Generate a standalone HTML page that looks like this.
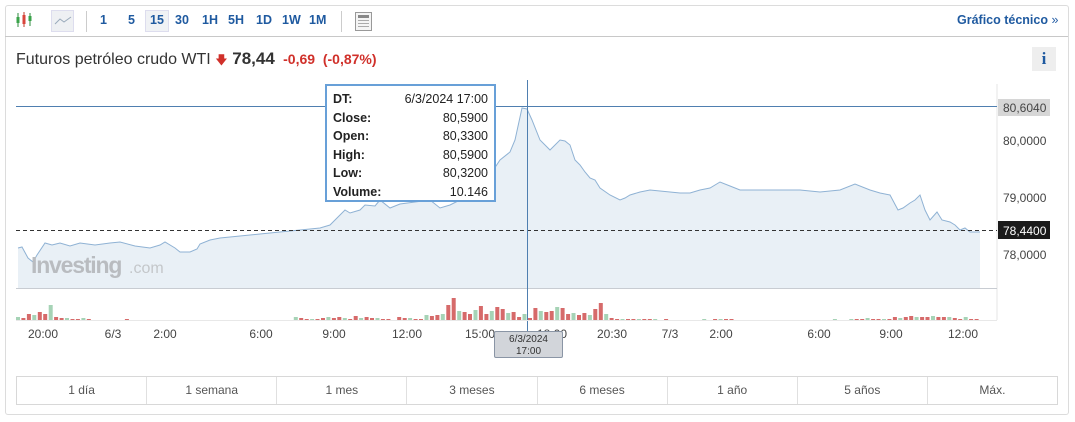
<!DOCTYPE html>
<html><head><meta charset="utf-8"><style>
body{margin:0;background:#fff;font-family:"Liberation Sans",Arial,sans-serif;width:1075px;height:422px;overflow:hidden;position:relative}
.box{position:absolute;left:5px;top:5px;width:1062px;height:408px;border:1px solid #dcdcdc;border-radius:3px}
.tb{position:absolute;left:5px;top:5px;width:1063px;height:31px;border-bottom:1px solid #c8c8c8}
.tf{position:absolute;top:13px;font-size:12.5px;font-weight:bold;color:#1f5aa0}
.title{position:absolute;left:16px;top:49px;font-size:16px;color:#333}
.rng{position:absolute;left:16px;top:376px;width:1040px;height:27px;border:1px solid #d8d8d8;display:flex}
.rng div{flex:1;border-right:1px solid #e0e0e0;text-align:center;font-size:12px;color:#555;line-height:27px}
.rng div:last-child{border-right:none}
.tl{position:absolute;top:327px;font-size:12px;color:#444;transform:translateX(-50%)}
.ax{position:absolute;left:1003px;font-size:12px;color:#444}
</style></head><body>
<div class="box"></div>
<div class="tb"></div>
<svg style="position:absolute;left:15px;top:11px" width="20" height="18"><g stroke-width="1"><line x1="3" y1="2" x2="3" y2="16" stroke="#2e8b3e"/><rect x="1.5" y="6" width="3" height="6" fill="#3aa34a"/><line x1="9" y1="1" x2="9" y2="16" stroke="#c0392b"/><rect x="7.5" y="4" width="3" height="9" fill="#d9453c"/><line x1="15" y1="2" x2="15" y2="15" stroke="#2e8b3e"/><rect x="13.5" y="5" width="3" height="5" fill="#3aa34a"/></g></svg>
<div style="position:absolute;left:51px;top:10px;width:21px;height:20px;background:#eef0f3;border:1px solid #dde"></div>
<svg style="position:absolute;left:54px;top:14px" width="18" height="12"><polyline points="1,10 6,5 10,8 17,3" fill="none" stroke="#9ab" stroke-width="1"/></svg>
<div style="position:absolute;left:86px;top:11px;width:1px;height:21px;background:#ccc"></div>
<div class="tf" style="left:100px">1</div><div class="tf" style="left:128px">5</div>
<div style="position:absolute;left:145px;top:10px;width:22px;height:20px;background:#f0f2f5;border:1px solid #dde"></div>
<div class="tf" style="left:150px">15</div><div class="tf" style="left:175px">30</div><div class="tf" style="left:202px">1H</div><div class="tf" style="left:228px">5H</div><div class="tf" style="left:256px">1D</div><div class="tf" style="left:282px">1W</div><div class="tf" style="left:309px">1M</div>
<div style="position:absolute;left:341px;top:11px;width:1px;height:21px;background:#ccc"></div>
<div style="position:absolute;left:355px;top:12px;width:15px;height:17px;border:1px solid #999;background:#f4f4f4"><div style="margin:2px;height:3px;background:#888"></div><div style="margin:2px;height:1px;background:#aaa"></div><div style="margin:2px;height:1px;background:#aaa"></div><div style="margin:2px;height:1px;background:#aaa"></div></div>
<div class="tf" style="left:957px">Gráfico técnico <span style="font-weight:normal;color:#2a62a8">»</span></div>
<div class="title">Futuros petróleo crudo WTI <span style="color:#d0302a;font-size:12px">&#129095;</span><b style="font-size:17px"> 78,44</b> <b style="color:#d0302a;font-size:14px">&nbsp;-0,69 &nbsp;(-0,87%)</b></div>
<div style="position:absolute;left:1032px;top:47px;width:24px;height:24px;background:#eee;color:#1f5aa0;font:bold 17px 'Liberation Serif',serif;text-align:center;line-height:24px">i</div>
<svg style="position:absolute;left:0;top:0" width="1075" height="422">
<line x1="997" y1="84" x2="997" y2="320" stroke="#e5e5e5"/>
<path d="M18,248 L22,247 L28,258 L33,262 L37,255 L45,243 L52,245 L60,243 L70,246 L80,243 L95,245 L110,243 L120,242 L135,246 L150,248 L160,245 L165,242 L175,248 L180,252 L190,252 L197,249 L200,244 L210,240 L220,238 L240,236 L260,234 L280,232 L300,230 L320,228 L330,225 L340,215 L345,210 L350,213 L360,210 L365,205 L375,206 L380,200 L390,208 L400,204 L430,200 L440,208 L450,205 L460,200 L470,195 L480,180 L490,175 L500,160 L510,152 L515,140 L522,108 L527,109 L532,120 L540,140 L550,150 L560,140 L565,141 L570,145 L575,160 L580,165 L585,172 L590,178 L595,180 L600,188 L610,195 L620,200 L625,198 L630,195 L640,192 L650,190 L670,192 L680,193 L690,193 L700,190 L710,188 L720,182 L730,186 L740,190 L760,190 L800,190 L820,192 L840,190 L855,184 L870,190 L880,193 L890,195 L898,210 L903,208 L910,203 L915,200 L920,195 L925,210 L930,220 L937,212 L942,220 L950,222 L955,225 L960,230 L965,228 L970,232 L980,232 L980,288 L18,288Z" fill="#e9f0f6"/>
<path d="M18,248 L22,247 L28,258 L33,262 L37,255 L45,243 L52,245 L60,243 L70,246 L80,243 L95,245 L110,243 L120,242 L135,246 L150,248 L160,245 L165,242 L175,248 L180,252 L190,252 L197,249 L200,244 L210,240 L220,238 L240,236 L260,234 L280,232 L300,230 L320,228 L330,225 L340,215 L345,210 L350,213 L360,210 L365,205 L375,206 L380,200 L390,208 L400,204 L430,200 L440,208 L450,205 L460,200 L470,195 L480,180 L490,175 L500,160 L510,152 L515,140 L522,108 L527,109 L532,120 L540,140 L550,150 L560,140 L565,141 L570,145 L575,160 L580,165 L585,172 L590,178 L595,180 L600,188 L610,195 L620,200 L625,198 L630,195 L640,192 L650,190 L670,192 L680,193 L690,193 L700,190 L710,188 L720,182 L730,186 L740,190 L760,190 L800,190 L820,192 L840,190 L855,184 L870,190 L880,193 L890,195 L898,210 L903,208 L910,203 L915,200 L920,195 L925,210 L930,220 L937,212 L942,220 L950,222 L955,225 L960,230 L965,228 L970,232 L980,232" fill="none" stroke="#8fb2d4" stroke-width="1"/>
<line x1="16" y1="288.5" x2="997" y2="288.5" stroke="#c8ccd2"/>
<line x1="16" y1="106.5" x2="997" y2="106.5" stroke="#4f7fb0"/>
<line x1="16" y1="230.5" x2="997" y2="230.5" stroke="#333" stroke-dasharray="4,3"/>
<line x1="527.5" y1="80" x2="527.5" y2="336" stroke="#4f7fb0"/>
<line x1="16" y1="320.5" x2="997" y2="320.5" stroke="#e8e8e8"/>
<g id="vol"></g>
<text x="31" y="273" font-family="Liberation Sans" font-weight="bold" font-size="23" fill="#b9bcc0" letter-spacing="-1.2">Investing</text>
<text x="129" y="273" font-family="Liberation Sans" font-size="16" fill="#c4c7ca">.com</text>
</svg>
<div style="position:absolute;left:325px;top:84px;width:171px;height:118px;background:#fff;border:2px solid #68a0d8;font-size:12.5px;color:#222;line-height:18.5px;padding:4px 6px 0 6px;box-sizing:border-box">
<div style="display:flex;justify-content:space-between"><b>DT:</b><span>6/3/2024 17:00</span></div>
<div style="display:flex;justify-content:space-between"><b>Close:</b><span>80,5900</span></div>
<div style="display:flex;justify-content:space-between"><b>Open:</b><span>80,3300</span></div>
<div style="display:flex;justify-content:space-between"><b>High:</b><span>80,5900</span></div>
<div style="display:flex;justify-content:space-between"><b>Low:</b><span>80,3200</span></div>
<div style="display:flex;justify-content:space-between"><b>Volume:</b><span>10.146</span></div>
</div>
<div style="position:absolute;left:998px;top:99px;width:52px;height:17px;background:#d6d6d6"></div>
<div class="ax" style="top:101px">80,6040</div>
<div class="ax" style="top:134px">80,0000</div>
<div class="ax" style="top:191px">79,0000</div>
<div style="position:absolute;left:998px;top:221px;width:52px;height:18px;background:#1a1a1a"></div>
<div class="ax" style="top:224px;color:#fff">78,4400</div>
<div class="ax" style="top:248px">78,0000</div>
<div class="tl" style="left:43px">20:00</div><div class="tl" style="left:113px">6/3</div><div class="tl" style="left:165px">2:00</div><div class="tl" style="left:261px">6:00</div><div class="tl" style="left:334px">9:00</div><div class="tl" style="left:407px">12:00</div><div class="tl" style="left:480px">15:00</div><div class="tl" style="left:552px">18:00</div><div class="tl" style="left:612px">20:30</div><div class="tl" style="left:670px">7/3</div><div class="tl" style="left:721px">2:00</div><div class="tl" style="left:819px">6:00</div><div class="tl" style="left:891px">9:00</div><div class="tl" style="left:963px">12:00</div>
<div style="position:absolute;left:494px;top:331px;width:69px;height:27px;background:#d2d5da;border:1px solid #8a95a5;border-radius:2px;font-size:10px;color:#333;text-align:center;line-height:12px;padding-top:2px;box-sizing:border-box">6/3/2024<br>17:00</div>
<div class="rng"><div>1 día</div><div>1 semana</div><div>1 mes</div><div>3 meses</div><div>6 meses</div><div>1 año</div><div>5 años</div><div>Máx.</div></div>
<script>
var h=[3,2,6,5,8,6,15,3,2,2,1,1,2,1,0,0,0,0,0,0,1,0,0,0,0,0,0,0,0,0,0,0,0,0,0,0,0,0,0,0,0,0,0,0,0,0,0,0,0,0,0,3,2,1,1,1,2,3,2,3,2,1,4,2,3,2,2,1,1,0,3,2,2,1,1,5,4,5,6,15,22,9,8,6,10,14,6,9,13,11,7,8,3,6,2,12,9,8,9,13,12,6,7,5,7,5,11,17,6,2,1,1,1,1,1,1,1,1,0,1,0,0,0,0,0,0,1,0,1,1,1,1,0,0,0,0,0,0,0,0,0,0,0,0,0,0,0,0,0,0,1,0,0,1,1,1,2,1,1,1,1,3,2,3,4,3,3,3,4,3,3,3,2,1,3,1,1];
var g=document.getElementById('vol'),s='',sp=964/h.length;
for(var i=0;i<h.length;i++){if(!h[i])continue;var x=16+i*sp,c=(i*7%3==0)?'#a6d3b6':'#d66a6a';s+='<rect x="'+x.toFixed(1)+'" y="'+(320-h[i])+'" width="4" height="'+h[i]+'" fill="'+c+'"/>';}
g.innerHTML=s;
</script>
</body></html>
